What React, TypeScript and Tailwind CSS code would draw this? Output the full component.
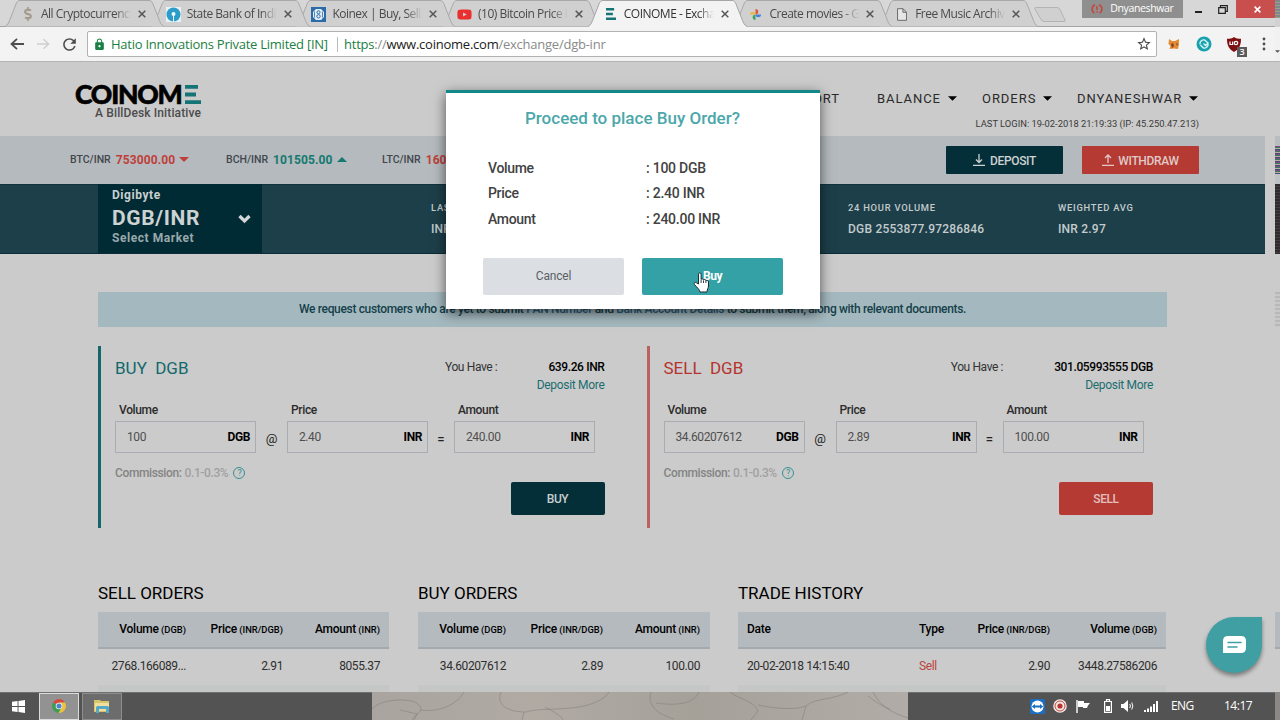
import type { ReactNode } from "react";
import { FaDollarSign, FaYoutube } from "react-icons/fa";
import { MdLock, MdOutlineStarBorder, MdRefresh } from "react-icons/md";

interface ITab {
  title: string;
  icon: ReactNode;
  active?: boolean;
}

interface IOrderPanel {
  side: "BUY" | "SELL";
  balance: string;
  volume: string;
  price: string;
  amount: string;
}

const Bars = ({ className }: { className: string }) => (
  <svg viewBox="0 0 16 20" preserveAspectRatio="none" className={className}>
    <path d="M0 0h13v4H0zM0 8h11v4H0zM0 16h16v4H0z" fill="#157476" />
  </svg>
);

const tabs: ITab[] = [
  {
    title: "All Cryptocurrencies",
    icon: <FaDollarSign className="text-[14px] text-[#a59a8c]" />,
  },
  {
    title: "State Bank of India",
    icon: (
      <svg viewBox="0 0 15 15" className="size-[15px]">
        <rect width="15" height="15" fill="#e8f1f5" />
        <circle cx="7.5" cy="7.5" r="7" fill="#2c9cc8" />
        <circle cx="7.5" cy="7" r="2" fill="#f4f8fa" />
        <path d="M7 8h1v7H7z" fill="#f4f8fa" />
      </svg>
    ),
  },
  {
    title: "Koinex | Buy, Sell and",
    icon: (
      <svg viewBox="0 0 15 15" className="size-[15px]">
        <rect width="15" height="15" fill="#2a6ba8" />
        <path d="M5 2h5l3 3v5l-3 3H5l-3-3V5z" fill="#e3edf6" />
        <circle cx="7.5" cy="5.3" r="1.5" fill="none" stroke="#2a6ba8" />
        <circle cx="7.5" cy="9.3" r="1.7" fill="none" stroke="#2a6ba8" />
        <path d="M3.5 4.5v6M11.500 4.500v6" stroke="#2a6ba8" strokeWidth=".8" />
      </svg>
    ),
  },
  {
    title: "(10) Bitcoin Price in",
    icon: <FaYoutube className="text-[15px] text-[#ea2f2f]" />,
  },
  {
    title: "COINOME - Exchange",
    icon: <Bars className="ml-[1px] h-[12px] w-[10px]" />,
    active: true,
  },
  {
    title: "Create movies - Go",
    icon: (
      <svg viewBox="0 0 14 14" className="size-[13px]">
        <path d="M7 7V1a3 3 0 0 1 0 6z" fill="#e0563f" />
        <path d="M7 7h6a3 3 0 0 1-6 0z" fill="#4a7fdc" />
        <path d="M7 7v6a3 3 0 0 1 0-6z" fill="#3aa268" />
        <path d="M7 7H1a3 3 0 0 1 6 0z" fill="#e8b84a" />
      </svg>
    ),
  },
  {
    title: "Free Music Archive",
    icon: (
      <svg viewBox="0 0 11 14" className="ml-[1px] h-[13px] w-[10px]">
        <path
          d="M.6.6h6L10.400 4.400v9H.6zM6.500.6v4h4"
          fill="#e6e6e6"
          stroke="#6d6d6d"
          strokeWidth="1.1"
        />
      </svg>
    ),
  },
];

const Tab = ({ tab, index }: { tab: ITab; index: number }) => (
  <div
    className="relative flex h-[27px] w-[145.700px] shrink-0 items-center pt-[1px] pl-[15px]"
    style={{ zIndex: tab.active ? 20 : 10 - index }}
  >
    <svg className="absolute top-0 left-0 -z-10 h-[27px] w-[160px]">
      <path
        d="M0 26.500C3 25 4 22 5.500 18L11 4C12 1.500 13 .5 15 .5H144C146 .5 147 1.500 148 4L153.500 18C155 22 156 25 159 26.500"
        fill={tab.active ? "#f3f3f3" : "#d0d0d0"}
        stroke={tab.active ? "#a5a5a5" : "#a9a9a9"}
      />
      {tab.active && <path d="M1 26.500H158" stroke="#f3f3f3" />}
    </svg>
    <div className="flex w-[15px] items-center justify-center">{tab.icon}</div>
    <div
      className={`ml-[6px] w-[92px] overflow-hidden text-[12px] tracking-[-0.5px] whitespace-nowrap [mask-image:linear-gradient(to_right,#000_74px,transparent_90px)] ${
        tab.active ? "text-[#333]" : "text-[#4a4a4a]"
      }`}
    >
      {tab.title}
    </div>
    <svg viewBox="0 0 8 8" className="ml-[5px] size-[8px] shrink-0">
      <path d="M.7.7l6.600 6.600M7.300.7L.7 7.300" stroke="#555" strokeWidth="1.5" />
    </svg>
  </div>
);

const TabStrip = () => (
  <div className="relative isolate flex h-[27px] bg-[#d7d7d7] pl-[5px] shadow-[inset_0_-1px_0_#a3a3a3]">
    {tabs.map((tab, index) => (
      <Tab key={tab.title} tab={tab} index={index} />
    ))}
    <svg className="mt-[6px] -mr-[2px] ml-[8px] h-[17px] w-[38px] shrink-0">
      <path
        d="M2.500 1.500H24Q26 1.500 27 3.500L32 14Q32.500 15.500 31 15.500H11Q9 15.500 8 13.500L2 3Q1.500 1.500 2.500 1.500z"
        fill="#d0d0d0"
        stroke="#b3b3b3"
      />
    </svg>
    <div className="ml-[13px] flex h-[18px] w-[101px] shrink-0 items-center justify-center gap-[7px] bg-[#8f8f8f] text-[10.500px] tracking-[-0.35px] text-white">
      <svg viewBox="0 0 12 10" className="h-[10px] w-[12px]">
        <path
          d="M4 .8A4.500 4.500 0 0 0 3.500 9M8 .8A4.500 4.500 0 0 1 8.500 9M6 2v4M6 7.200v1.300"
          fill="none"
          stroke="#c8453c"
          strokeWidth="1.5"
        />
      </svg>
      Dnyaneshwar
    </div>
    <div className="flex h-[18px] w-[53px] shrink-0 items-center pl-[12px]">
      <div className="mt-[5px] h-[2px] w-[7px] bg-[#222]" />
      <svg viewBox="0 0 10 9" className="ml-[16px] h-[9px] w-[10px]">
        <path
          d="M.7 2.700h6.600v5.600H.7zM2.500 2.500V.7h6.800v5.600H7.500"
          fill="none"
          stroke="#222"
          strokeWidth="1.2"
        />
      </svg>
    </div>
    <div className="flex h-[18px] w-[39px] shrink-0 items-center justify-center bg-[#c94f4f] pl-[4px]">
      <svg viewBox="0 0 8 8" className="size-[7px]">
        <path d="M.7.7l6.600 6.600M7.300.7L.7 7.300" stroke="#fff" strokeWidth="1.8" />
      </svg>
    </div>
  </div>
);

const AddressBar = () => (
  <div className="flex h-[35px] items-center border-b border-[#b4b4b4] bg-[#f3f3f3] pl-[10px]">
    <svg viewBox="0 0 14 12" className="h-[12px] w-[14px]">
      <path d="M7 .8L1.500 6 7 11.200M1.500 6H14" fill="none" stroke="#4d4d4d" strokeWidth="1.8" />
    </svg>
    <svg viewBox="0 0 14 12" className="ml-[13px] h-[12px] w-[13px]">
      <path d="M7 .8L12.500 6 7 11.200M12.500 6H0" fill="none" stroke="#cfcfcf" strokeWidth="1.6" />
    </svg>
    <MdRefresh className="ml-[10px] text-[19px] text-[#4d4d4d]" />
    <div className="ml-[8px] flex h-[26px] w-[1070px] items-center rounded-[2px] border border-[#b2b2b2] bg-white text-[13px] whitespace-nowrap">
      <MdLock className="ml-[5px] text-[13px] text-[#1b8043]" />
      <span className="ml-[5px] w-[221px] pt-[1px] tracking-[-0.25px] text-[#1b8043]">
        Hatio Innovations Private Limited [IN]
      </span>
      <span className="mr-[6px] ml-[5px] h-[15px] w-px bg-[#bbb]" />
      <span className="pt-[1px] tracking-[-0.24px] text-[#8a8a8a]">
        <span className="text-[#1b8043]">https</span>://
        <span className="text-[#222]">www.coinome.com</span>/exchange/dgb-inr
      </span>
      <MdOutlineStarBorder className="mr-[4px] ml-auto text-[16px] text-[#444]" />
    </div>
    <svg viewBox="0 0 12 12" className="ml-[11px] h-[12px] w-[12px]">
      <path d="M1 1l3 2h3l4-2v5l-1 5-4-.5L1.500 11 2.500 8 .5 6z" fill="#e58a35" />
      <path d="M3 6l2-1 1 3-2 2zM8 5l2 1-1 2z" fill="#7b4622" />
    </svg>
    <svg viewBox="0 0 16 16" className="ml-[16px] size-[16px]">
      <circle cx="8" cy="8" r="7.500" fill="#17a0ad" />
      <path
        d="M4 8.500C3.500 5.500 6 3.500 8.500 4L12 7 9.500 9.500 7.500 7.500M12 7.500C12.500 10.500 10 12.500 7.500 12L4.500 9"
        fill="none"
        stroke="#d5f3f3"
        strokeWidth="1.400"
      />
    </svg>
    <div className="relative ml-[15px] flex">
      <svg viewBox="0 0 14 15" className="h-[15px] w-[14px]">
        <path d="M7 0c2 1.500 4 1.800 7 1.800C14 8 12.500 12 7 15 1.500 12 0 8 0 1.800 3 1.800 5 1.500 7 0z" fill="#800f14" />
        <path d="M3 4.500v3h2.700V4.500" fill="none" stroke="#fff" strokeWidth="1.200" />
        <circle cx="9" cy="6" r="1.700" fill="none" stroke="#fff" strokeWidth="1.200" />
      </svg>
      <span className="absolute top-[10px] left-[10px] flex h-[10px] w-[10px] items-center justify-center bg-[#5b5b5b] text-[9px] font-semibold text-white">
        3
      </span>
    </div>
    <svg viewBox="0 0 4 14" className="ml-[21px] h-[14px] w-[4px]" fill="#4d4d4d">
      <circle cx="2" cy="2" r="1.400" />
      <circle cx="2" cy="7" r="1.400" />
      <circle cx="2" cy="12" r="1.400" />
    </svg>
  </div>
);

const Caret = ({ up, className }: { up?: boolean; className: string }) => (
  <svg viewBox="0 0 10 5" className={className} fill="currentColor">
    <path d={up ? "M0 5L5 0l5 5z" : "M0 0h10L5 5z"} />
  </svg>
);

const NavItem = ({ label, className }: { label: string; className: string }) => (
  <div className={`flex shrink-0 items-center gap-[7px] ${className}`}>
    {label}
    <Caret className="h-[5px] w-[9px] text-black" />
  </div>
);

const SiteHeader = () => (
  <div className="flex h-[74px] w-[1265px] justify-between pr-[66px] pl-[75px]">
    <div className="w-[126px] pt-[22px]">
      <div className="flex h-[21px] items-center justify-between">
        <span className="font-[Lato] text-[26.500px] leading-[21px] font-black tracking-[-1.2px] text-black [-webkit-text-stroke:0.6px_#000]">
          COINOM
        </span>
        <Bars className="h-[19px] w-[16px] shrink-0" />
      </div>
      <div className="mt-[1px] flex justify-end text-[12px] leading-[14px] font-medium tracking-[0.12px] whitespace-nowrap text-[#4c4c4c]">
        A BillDesk Initiative
      </div>
    </div>
    <div className="pt-[28px] text-[#2a2a2a]">
      <div className="flex justify-end text-[13px] leading-[17px] tracking-[0.95px]">
        <div className="mr-[37px]">SUPPORT</div>
        <NavItem label="BALANCE" className="w-[105px]" />
        <NavItem label="ORDERS" className="w-[95px]" />
        <NavItem label="DNYANESHWAR" className="w-[122px]" />
      </div>
      <div className="mt-[10px] text-right text-[9.375px] leading-[14px] text-[#3a3a3a]">
        LAST LOGIN: 19-02-2018 21:19:33 (IP: 45.250.47.213)
      </div>
    </div>
  </div>
);

const tickers = [
  { pair: "BTC/INR", value: "753000.00", up: false },
  { pair: "BCH/INR", value: "101505.00", up: true },
  { pair: "LTC/INR", value: "16000.00", up: false },
];

const TickerBar = () => (
  <div className="flex h-[48px] w-[1265px] items-center bg-[#b5babe] pr-[66px] pl-[70px]">
    {tickers.map((t) => (
      <div key={t.pair} className="flex w-[156px] items-center pb-[1px]">
        <span className="text-[10.500px] font-medium text-[#41474d]">{t.pair}</span>
        <span
          className={`ml-[5px] flex items-center gap-[4px] text-[12px] font-bold tracking-[0.1px] ${
            t.up ? "text-[#14796f]" : "text-[#bf403b]"
          }`}
        >
          {t.value}
          <Caret up={t.up} className="h-[5px] w-[10px]" />
        </span>
      </div>
    ))}
    <button className="ml-auto flex h-[28px] w-[117px] items-center justify-center gap-[5px] rounded-[1px] bg-[#042f38] text-[12px] font-medium tracking-[-0.35px] text-[#cdd2d3]">
      <svg viewBox="0 0 12 12" className="h-[12px] w-[12px]">
        <path d="M0 11.300h12M6 0v8M3 5.500l3 3 3-3" fill="none" stroke="currentColor" strokeWidth="1.300" />
      </svg>
      <span className="pt-[1px]">DEPOSIT</span>
    </button>
    <button className="ml-[19px] flex h-[28px] w-[117px] items-center justify-center gap-[4px] rounded-[1px] bg-[#b43a33] text-[12px] font-medium tracking-[-0.35px] text-[#e0c9c7]">
      <svg viewBox="0 0 12 12" className="h-[12px] w-[12px]">
        <path d="M0 11.300h12M6 9V1M3 4l3-3 3 3" fill="none" stroke="currentColor" strokeWidth="1.300" />
      </svg>
      <span className="pt-[1px]">WITHDRAW</span>
    </button>
  </div>
);

const Stat = ({ label, value, className }: { label: string; value: string; className: string }) => (
  <div className={`shrink-0 pt-[16px] whitespace-nowrap text-[#c3cbcd] ${className}`}>
    <div className="text-[9.375px] leading-[16px] font-medium tracking-[0.75px]">{label}</div>
    <div className="mt-[4px] text-[12px] leading-[18px] font-medium tracking-[0.21px]">{value}</div>
  </div>
);

const MarketBar = () => (
  <div className="flex h-[70px] w-[1265px] border-b border-[#0c2d37] bg-[#1d3f49] pl-[98px] shadow-[inset_0_1px_0_#12343e]">
    <div className="flex w-[164px] items-center justify-between bg-[#012b34] pr-[11px] pl-[14px]">
      <div className="pb-[6px] font-bold">
        <div className="text-[12px] leading-[16px] tracking-[0.55px] text-[#c9cfd0]">Digibyte</div>
        <div className="text-[21px] leading-[31px] tracking-[0.65px] text-[#cdd2d3]">DGB/INR</div>
        <div className="-mt-[2px] text-[12px] leading-[12px] tracking-[0.55px] text-[#9aa8ac]">
          Select Market
        </div>
      </div>
      <svg viewBox="0 0 13 10" className="h-[10px] w-[13px]">
        <path d="M1.500 2L6.500 7l5-5" fill="none" stroke="#d3d6d7" strokeWidth="3.200" />
      </svg>
    </div>
    <Stat label="LAST PRICE" value="INR 2.40" className="ml-[169px] w-[417px]" />
    <Stat label="24 HOUR VOLUME" value="DGB 2553877.97286846" className="w-[210px]" />
    <Stat label="WEIGHTED AVG" value="INR 2.97" className="w-[120px]" />
  </div>
);

const AmountField = ({ label, value, unit }: { label: string; value: string; unit: string }) => (
  <div className="w-[141px] shrink-0 text-[12px]">
    <div className="pl-[4px] leading-[16px] font-medium tracking-[-0.35px] text-[#2b2b2b]">{label}</div>
    <div className="mt-[3px] flex h-[32px] items-center justify-between border border-[#a9acb3] pr-[5px] pl-[11px]">
      <span className="tracking-[-0.4px] text-[#4f4f4f]">{value}</span>
      <span className="font-bold tracking-[-0.4px] text-black">{unit}</span>
    </div>
  </div>
);

const OrderPanel = ({ side, balance, volume, price, amount }: IOrderPanel) => {
  const buy = side === "BUY";
  return (
    <div
      className={`h-[182px] w-[548.500px] shrink-0 border-l-[3px] pr-[42px] pl-[14px] ${
        buy ? "border-[#146668]" : "border-[#b9625e]"
      }`}
    >
      <div className="flex h-[56px] justify-between pt-[13px]">
        <div
          className={`text-[17px] leading-[18px] tracking-[0.02px] [word-spacing:4px] ${
            buy ? "text-[#12686b]" : "text-[#b6332e]"
          }`}
        >
          {side} DGB
        </div>
        <div className="text-right text-[12px] leading-[18px] tracking-[-0.38px]">
          <div className="-mt-[1px] flex justify-end gap-[51px]">
            <span className="text-[#333]">You Have :</span>
            <span className="font-medium text-black">{balance}</span>
          </div>
          <div className="tracking-[-0.3px] text-[#1c6d70]">Deposit More</div>
        </div>
      </div>
      <div className="flex items-end">
        <AmountField label="Volume" value={volume} unit="DGB" />
        <div className="h-[24px] w-[31px] shrink-0 text-center text-[13px] text-[#222]">@</div>
        <AmountField label="Price" value={price} unit="INR" />
        <div className="h-[24px] w-[26px] shrink-0 text-center text-[13px] font-medium text-[#222]">=</div>
        <AmountField label="Amount" value={amount} unit="INR" />
      </div>
      <div className="mt-[12px] flex h-[16px] items-center text-[12px] tracking-[-0.38px] text-[#848484]">
        <span className="font-medium">Commission:</span>
        <span className="ml-[3px] font-medium text-[#a0a0a0]">0.1-0.3%</span>
        <span className="ml-[5px] flex size-[12px] items-center justify-center rounded-full border border-[#3a8f92] text-[9px] leading-none text-[#3a8f92]">
          ?
        </span>
      </div>
      <button
        className={`mt-[1px] ml-auto flex h-[33px] w-[94px] items-center justify-center rounded-[2px] text-[12px] font-medium tracking-[-0.4px] ${
          buy ? "bg-[#042f38] text-[#c6cdcf]" : "bg-[#b43a33] text-[#e2c0bd]"
        }`}
      >
        {side}
      </button>
    </div>
  );
};

const Head = ({ label, unit, className }: { label: string; unit?: string; className: string }) => (
  <div className={`shrink-0 whitespace-nowrap ${className}`}>
    {label}
    {unit && <span className="text-[9.375px] tracking-normal"> ({unit})</span>}
  </div>
);

const headRow =
  "flex h-[37px] items-center border-b-2 border-[#a3a9ad] bg-[#b5babe] pb-[2px] text-[12px] font-medium tracking-[-0.25px] text-black";
const bodyRow = "flex h-[36px] items-center pb-[2px] text-[12px] tracking-[-0.4px] text-[#2e2e2e]";
const tableTitle = "h-[30px] text-[17px] leading-[22px] tracking-[-0.02px] text-black";

const OrderTable = ({ title, cells, className }: { title: string; cells: string[]; className: string }) => (
  <div className={`shrink-0 ${className}`}>
    <div className={tableTitle}>{title}</div>
    <div className={headRow}>
      <Head label="Volume" unit="DGB" className="w-[88px] text-right" />
      <Head label="Price" unit="INR/DGB" className="w-[97px] text-right" />
      <Head label="Amount" unit="INR" className="w-[97px] text-right" />
    </div>
    <div className={bodyRow}>
      <div className="w-[88px] text-right">{cells[0]}</div>
      <div className="w-[97px] text-right">{cells[1]}</div>
      <div className="w-[97px] text-right">{cells[2]}</div>
    </div>
    <div className="h-[8px] bg-[#c5c7c7]" />
  </div>
);

const TradeHistory = () => (
  <div className="w-[428px] shrink-0">
    <div className={tableTitle}>TRADE HISTORY</div>
    <div className={headRow}>
      <Head label="Date" className="w-[181px] pl-[9px]" />
      <Head label="Type" className="w-[41px]" />
      <Head label="Price" unit="INR/DGB" className="w-[90px] text-right" />
      <Head label="Volume" unit="DGB" className="w-[107px] text-right" />
    </div>
    <div className={bodyRow}>
      <div className="w-[181px] pl-[9px]">20-02-2018 14:15:40</div>
      <div className="w-[41px] text-[#b8453f]">Sell</div>
      <div className="w-[90px] text-right">2.90</div>
      <div className="w-[107px] text-right">3448.27586206</div>
    </div>
    <div className="h-[8px] bg-[#c5c7c7]" />
  </div>
);

const orderDetails = [
  { label: "Volume", value: "100 DGB" },
  { label: "Price", value: "2.40 INR" },
  { label: "Amount", value: "240.00 INR" },
];

const ConfirmModal = () => (
  <div className="absolute top-[90px] left-[446px] h-[219px] w-[374px] border-t-[3px] border-[#148788] bg-white px-[37px] shadow-[0_4px_12px_rgba(0,0,0,0.6)]">
    <h2 className="pt-[14px] pr-[1px] text-center text-[17px] leading-[22px] font-medium text-[#4ba7aa]">
      Proceed to place Buy Order?
    </h2>
    <div className="mt-[27px] pl-[5px]">
      {orderDetails.map((d) => (
        <div
          key={d.label}
          className="flex h-[25.300px] items-center text-[14px] font-medium tracking-[-0.32px] text-[#424242]"
        >
          <span className="w-[158px]">{d.label}</span>
          <span className="tracking-[-0.25px]">: {d.value}</span>
        </div>
      ))}
    </div>
    <div className="mt-[26px] flex gap-[18px]">
      <button className="h-[37px] w-[141px] rounded-[2px] bg-[#dbdfe4] text-[12px] tracking-[-0.2px] text-[#5a5f64]">
        Cancel
      </button>
      <button className="h-[37px] w-[141px] rounded-[2px] bg-[#33a1a6] text-[12px] font-bold tracking-[-0.4px] text-white">
        Buy
      </button>
    </div>
    <svg viewBox="0 0 16 21" className="absolute top-[179px] left-[247px] h-[21px] w-[17px]">
      <path
        d="M5 12V2.200C5 .3 7.600.3 7.600 2.200V7.500C8 6.500 10 6.700 10 8 10.500 7 12.500 7.300 12.400 8.700 13.200 8 15 8.500 15 10V14C15 16 13.500 17.500 13.500 20H6.500C6.200 17.500 3.500 15.500 1 12.500 0 11 1.500 9.800 3 10.800z"
        fill="#fff"
        stroke="#1d2b33"
        strokeWidth="1"
      />
      <path d="M7.600 8v3M10 8.500V11M12.400 9v2" stroke="#1d2b33" strokeWidth=".9" />
    </svg>
  </div>
);

const ChatButton = () => (
  <div className="absolute top-[617px] left-[1206px] flex size-[56px] items-center justify-center rounded-full rounded-tr-[5px] bg-[#3f9fa3] pb-[1px] pl-[1px] shadow-[0_3px_4px_rgba(0,0,0,0.4)]">
    <svg viewBox="0 0 23 17" className="h-[17px] w-[23px]">
      <path d="M5 0H18Q23 0 23 5V12Q23 17 18 17H0V5Q0 0 5 0z" fill="#fff" />
      <path d="M5 6.500h13M5 11h9" stroke="#3f9fa3" strokeWidth="1.600" strokeLinecap="round" />
    </svg>
  </div>
);

const Pavement = () => (
  <svg viewBox="0 0 536 28" className="h-[28px] w-[536px]">
    <defs>
      <linearGradient id="stone">
        <stop offset="0" stopColor="#aaa4a0" />
        <stop offset=".3" stopColor="#b0aaa3" />
        <stop offset=".6" stopColor="#a5a199" />
        <stop offset="1" stopColor="#b1aca7" />
      </linearGradient>
    </defs>
    <rect width="536" height="28" fill="url(#stone)" />
    <g fill="none" stroke="#7d7670" strokeOpacity=".45">
      <path d="M0 17C6 10 22 6 40 9 49 12 52 18 45 22L42 28M48 18C60 20 82 17 92 0M28 18L45 22 40 28" />
      <path d="M129 0C124 12 134 20 154 20 173 14 212 22 234 4L237 0M152 20L150 28M173 15C182 20 190 24 191 28" />
      <path d="M279 0C275 12 284 22 302 27M284 11C304 14 322 12 327 0M358 0C370 9 381 8 386 19L379 28M386 13C404 17 424 18 434 14 442 6 462 8 476 0M434 14L430 28" />
      <path d="M501 0C508 14 520 21 536 26M496 4C506 12 514 16 518 17" />
    </g>
  </svg>
);

const Taskbar = () => (
  <div className="flex h-[28px] items-center bg-[#535353] text-white shadow-[inset_0_1px_0_#6f6f6f]">
    <svg viewBox="0 0 14 14" className="ml-[12px] size-[13px]" fill="#fff">
      <path d="M0 2l6-.9v5.400H0zM7 1l7-1v6.500H7zM0 7.500h6v5.400L0 12zM7 7.500h7V14l-7-1z" />
    </svg>
    <div className="ml-[14px] flex h-[27px] w-[40px] items-center justify-center border border-[#dcdcdc] bg-[#929292]">
      <svg viewBox="0 0 14 14" className="size-[14px]">
        <path d="M7 7L1 3.500A7 7 0 0 1 13 3.500H7z" fill="#d84a3c" />
        <path d="M7 7L1 3.500A7 7 0 0 0 6.500 14l3-5z" fill="#3f9c55" />
        <path d="M7 3.500h6A7 7 0 0 1 6.500 14L10 8z" fill="#efc23d" />
        <circle cx="7" cy="7" r="3.300" fill="#eee" />
        <circle cx="7" cy="7" r="2.500" fill="#4b83cf" />
      </svg>
    </div>
    <div className="ml-[3px] flex h-[27px] w-[40px] items-center justify-center border border-[#8d8d8d] bg-[#6c6c6c]">
      <svg viewBox="0 0 16 14" className="h-[14px] w-[16px]">
        <path d="M0 2V1h6l1 1h8v11H0z" fill="#d9c36d" />
        <path d="M1 4h14v8H1z" fill="#efe0a0" />
        <path d="M2 14V8.500Q2 7 3.500 7h10Q15 7 15 8.500V14h-3v-4H5v4z" fill="#57a8c4" />
      </svg>
    </div>
    <div className="ml-[250px] shrink-0">
      <Pavement />
    </div>
    <svg viewBox="0 0 15 15" className="ml-[122px] size-[15px] shrink-0">
      <rect width="15" height="15" rx="1.500" fill="#1b6fc2" />
      <circle cx="7.500" cy="7.500" r="6" fill="#fff" />
      <path d="M1.800 7.500L5 5v1.600h5V5l3.200 2.500L10 10V8.400H5V10z" fill="#1b6fc2" />
    </svg>
    <svg viewBox="0 0 14 14" className="ml-[8px] size-[14px] shrink-0">
      <circle cx="7" cy="7" r="6.800" fill="#f2e9e7" />
      <circle cx="7" cy="7" r="5" fill="none" stroke="#c4453b" />
      <circle cx="7" cy="7" r="2.600" fill="#b7352c" />
    </svg>
    <svg viewBox="0 0 14 13" className="ml-[9px] h-[13px] w-[14px] shrink-0">
      <path d="M1 0v13" stroke="#fff" strokeWidth="1.400" />
      <path d="M2 1h6v2h6l-2 2.500L11 8H7V7H2z" fill="#fff" />
    </svg>
    <svg viewBox="0 0 8 14" className="ml-[14px] h-[14px] w-[8px] shrink-0">
      <path d="M.6 2.500h6.800v10.900H.6zM2.500 2V.6h3V2" fill="none" stroke="#fff" strokeWidth="1.200" />
      <path d="M2 7h4v5H2z" fill="#fff" />
    </svg>
    <svg viewBox="0 0 14 12" className="ml-[9px] h-[12px] w-[14px] shrink-0">
      <path d="M0 4h2.500L7 0v12L2.500 8H0z" fill="#fff" />
      <path d="M8.800 4Q10 6 8.800 8M10.700 2.500Q13 6 10.700 9.500" fill="none" stroke="#fff" />
    </svg>
    <svg viewBox="0 0 14 11" className="ml-[9px] h-[11px] w-[14px] shrink-0" fill="#fff">
      <path d="M0 9h2v2H0zM3 7.500h2V11H3zM6 5.500h2V11H6zM9 3h2v8H9zM12 0h2v11h-2z" />
    </svg>
    <span className="ml-[13px] w-[53px] shrink-0 text-[12px] tracking-[-0.6px]">ENG</span>
    <span className="text-[12px] tracking-[-0.5px]">14:17</span>
  </div>
);

// Sliver of the second monitor that shows past the window's right edge.
const EdgeStrip = () => (
  <div className="absolute top-0 right-0 flex h-[720px] w-[5px] flex-col bg-[#cbcbcb]">
    <div className="h-[18px] bg-[repeating-linear-gradient(#8a7f9a_0_1px,#6f9480_1px_2px,#a09a90_2px_3px)]" />
    <div className="h-[9px] bg-[#d2d2d2]" />
    <div className="h-[35px] border-b border-[#b4b4b4] bg-[#f1f1f1]">
      <Caret className="mt-[20px] h-[9px] w-[5px] text-[#555]" />
    </div>
    <div className="mt-[74px] h-[10px] bg-[#b9bdc0]" />
    <div className="h-[28px] bg-[repeating-linear-gradient(#7a4a86_0_1px,#3f7a56_1px_2px,#b9a9a0_2px_3px,#44507a_3px_4px)]" />
    <div className="h-[10px] bg-[#c0c3c5]" />
    <div className="h-[70px] bg-[repeating-linear-gradient(#2f2b2f_0_2px,#45403f_2px_3px)]" />
    <div className="mt-[38px] h-[35px] bg-[repeating-linear-gradient(#b8b8b8_0_2px,#c8c8c8_2px_4px)]" />
    <div className="mt-[285px] h-[37px] border-b-2 border-[#a3a9ad] bg-[#b5babe]" />
    <div className="mt-auto h-[28px] bg-[#8b8886]" />
  </div>
);

const App = () => {
  return (
    <div className="relative h-[720px] w-[1280px] overflow-hidden bg-[#cbcbcb] font-[Roboto,sans-serif]">
      <div className="font-['Open_Sans',sans-serif]">
        <TabStrip />
        <AddressBar />
      </div>
      <div className="h-[630px] overflow-hidden">
        <SiteHeader />
        <TickerBar />
        <MarketBar />
        <div className="mt-[38px] ml-[98px] flex h-[35px] w-[1069px] items-center justify-center bg-[#a4b9bf] pb-[1px] text-[12px] font-medium tracking-[-0.34px] text-[#15404a]">
          <span>
            We request customers who are yet to submit{" "}
            <span className="text-[#2a5f7c]">PAN Number</span> and{" "}
            <span className="text-[#2a5f7c]">Bank Account Details</span> to submit them, along
            with relevant documents.
          </span>
        </div>
        <div className="mt-[19px] ml-[98px] flex">
          <OrderPanel side="BUY" balance="639.26 INR" volume="100" price="2.40" amount="240.00" />
          <OrderPanel
            side="SELL"
            balance="301.05993555 DGB"
            volume="34.60207612"
            price="2.89"
            amount="100.00"
          />
        </div>
        <div className="mt-[54px] ml-[98px] flex">
          <OrderTable title="SELL ORDERS" cells={["2768.166089...", "2.91", "8055.37"]} className="mr-[29px] w-[291px]" />
          <OrderTable title="BUY ORDERS" cells={["34.60207612", "2.89", "100.00"]} className="mr-[28px] w-[292px]" />
          <TradeHistory />
        </div>
      </div>
      <div className="font-['Open_Sans',sans-serif]">
        <Taskbar />
      </div>
      <ConfirmModal />
      <ChatButton />
      <EdgeStrip />
    </div>
  );
};
export default App;
